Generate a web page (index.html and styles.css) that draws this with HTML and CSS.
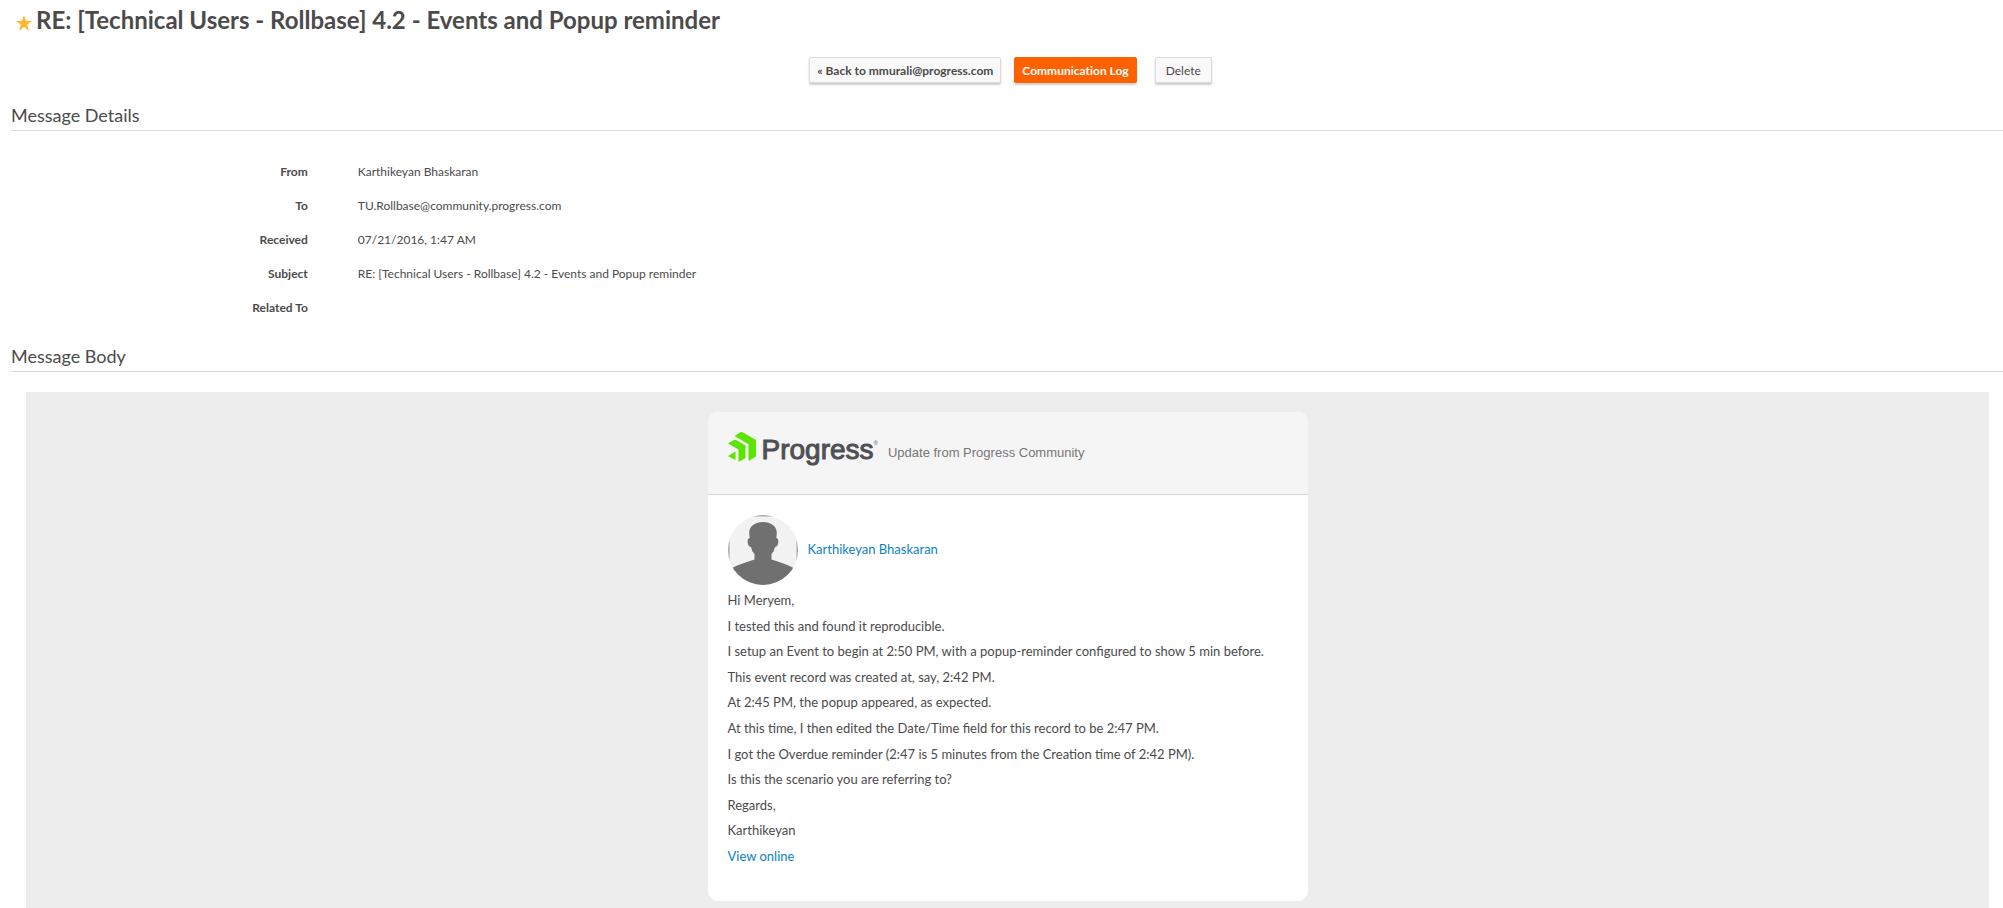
FILE: index.html
```html
<!DOCTYPE html>
<html lang="en">
<head>
    <meta charset="utf-8">
    <title>RE: [Technical Users - Rollbase] 4.2 - Events and Popup reminder</title>
    <link rel="stylesheet" href="styles.css">
</head>
<body>
    <header class="page-title">
        <svg class="star" viewBox="0 0 16 16" aria-hidden="true">
            <path d="M8 0l2 5.800 6 .1-4.800 3.700 1.800 6.100L8 12.100 3 15.700l1.800-6.100L0 5.900l6-.1z" fill="#fdb933"/>
        </svg>
        <h1>RE: [Technical Users - Rollbase] 4.2 - Events and Popup reminder</h1>
    </header>

    <div class="toolbar">
        <button type="button" class="btn btn-back">« Back to mmurali@progress.com</button>
        <button type="button" class="btn btn-primary">Communication Log</button>
        <button type="button" class="btn btn-delete">Delete</button>
    </div>

    <section class="section">
        <h2>Message Details</h2>
        <table class="details">
            <tr>
                <th scope="row">From</th>
                <td>Karthikeyan Bhaskaran</td>
            </tr>
            <tr>
                <th scope="row">To</th>
                <td>TU.Rollbase@community.progress.com</td>
            </tr>
            <tr>
                <th scope="row">Received</th>
                <td>07/21/2016, 1:47 AM</td>
            </tr>
            <tr>
                <th scope="row">Subject</th>
                <td>RE: [Technical Users - Rollbase] 4.2 - Events and Popup reminder</td>
            </tr>
            <tr>
                <th scope="row">Related To</th>
                <td></td>
            </tr>
        </table>
    </section>

    <section class="section">
        <h2>Message Body</h2>
        <div class="mail">
            <div class="card">
                <div class="card-header">
                    <!-- Progress logo -->
                    <svg class="logo-mark" viewBox="0 0 28 30" aria-hidden="true">
                        <g fill="#5ce500">
                            <path d="M6.500 4L12 .5Q13.500 -.3 15 .5L28 8V24.500L20.500 29V12.300z"/>
                            <path d="M0 11.500L5.500 8.200Q7 7.500 8.500 8.300L17.500 13.500V26L10.500 30V17.500z"/>
                            <path d="M0 24L7.500 19.500V28z"/>
                        </g>
                    </svg>
                    <span class="logo-name">Progress<sup>®</sup></span>
                    <span class="tagline">Update from Progress Community</span>
                </div>
                <div class="card-body">
                    <div class="author">
                        <svg class="avatar" viewBox="0 0 70 70" aria-hidden="true">
                            <defs>
                                <clipPath id="round"><circle cx="35" cy="35" r="35"/></clipPath>
                            </defs>
                            <g clip-path="url(#round)">
                                <rect width="70" height="70" fill="#f2f2f2"/>
                                <path d="M.5 0V70M69.500 0V70M0 .5H70" stroke="#a5a5a5" stroke-width="2"/>
                                <path d="M35 7C43 7 49 11.500 48.800 18L48.300 23C51 23 51 29 48.500 31.500C47 32 47 32 46.500 33.500C46 36 45 37.500 43.500 39V44.500C52 47.500 59 49 65.500 53V70H4V53C11 49 18 47.500 26.500 44.500V39C25 37.500 24 36 23.500 33.500C23 32 23 32 21.500 31.500C19 29 19 23 21.700 23L21.200 18C21 11.500 27 7 35 7z" fill="#707070"/>
                            </g>
                        </svg>
                        <a href="#">Karthikeyan Bhaskaran</a>
                    </div>
                    <p>Hi Meryem,</p>
                    <p>I tested this and found it reproducible.</p>
                    <p>I setup an Event to begin at 2:50 PM, with a popup-reminder configured to show 5 min before.</p>
                    <p>This event record was created at, say, 2:42 PM.</p>
                    <p>At 2:45 PM, the popup appeared, as expected.</p>
                    <p>At this time, I then edited the Date/Time field for this record to be 2:47 PM.</p>
                    <p>I got the Overdue reminder (2:47 is 5 minutes from the Creation time of 2:42 PM).</p>
                    <p>Is this the scenario you are referring to?</p>
                    <p>Regards,</p>
                    <p>Karthikeyan</p>
                    <p><a href="#">View online</a></p>
                </div>
            </div>
        </div>
    </section>
</body>
</html>
```

FILE: styles.css
```css
* {
    box-sizing: border-box;
}

body {
    margin: 0;
    font-family: Lato, sans-serif;
    font-size: 12px;
    color: #4b4b4b;
    background: #fff;
}

a {
    color: #0a82c8;
    text-decoration: none;
}

.page-title {
    display: flex;
    align-items: center;
    gap: 4px;
    height: 38px;
    padding-left: 16px;
}

.page-title h1 {
    margin: 0;
    font-size: 24px;
    font-weight: bold;
}

.star {
    width: 16px;
    height: 16px;
    margin-top: 8px;
}

.toolbar {
    display: flex;
    justify-content: center;
    padding: 19px 0 16px 18px;
}

.btn {
    height: 26px;
    padding: 0 7px;
    border: 1px solid #dcdcdc;
    border-radius: 2px;
    background: #f9f9f9;
    box-shadow: 0 2px 2px rgba(0, 0, 0, 0.2);
    color: #4b4b4b;
    font-family: inherit;
    font-size: 12px;
    font-variant-ligatures: none;
    cursor: pointer;
}

.btn-back {
    font-weight: bold;
}

.btn-primary {
    margin-left: 13px;
    border-color: #ff6000;
    background: #ff6000;
    color: #fff;
    font-weight: bold;
}

.btn-delete {
    margin-left: 18px;
    padding: 0 10px;
}

.section {
    padding-left: 11px;
}

.section h2 {
    height: 32px;
    margin: 0;
    border-bottom: 1px solid #d9d9d9;
    font-size: 18px;
    font-weight: normal;
    line-height: 32px;
}

.details {
    width: 100%;
    margin: 23px 0 16px;
    border-collapse: collapse;
}

.details tr {
    height: 34px;
}

.details th {
    width: 15%;
    padding: 0 2px 0 0;
    text-align: right;
}

.details td {
    padding: 0 0 0 48px;
}

.mail {
    margin: 20px 14px 0 15px;
    padding: 20px 0 7px;
    background: #ededed;
}

.card {
    max-width: 600px;
    margin: 0 auto;
    border-radius: 10px;
    background: #fff;
    font-size: 13px;
}

.card-header {
    display: flex;
    align-items: center;
    height: 83px;
    padding: 0 20px;
    border-bottom: 1px solid #d6d6d6;
    border-radius: 10px 10px 0 0;
    background: #f5f5f5;
    font-family: "Liberation Sans", Arial, sans-serif;
}

.logo-mark {
    width: 28px;
    height: 30px;
    margin-bottom: 12px;
}

.logo-name {
    display: flex;
    margin: 0 10px 6px 6px;
    color: #4f5056;
    font-size: 28px;
    -webkit-text-stroke: 1px #4f5056;
}

.logo-name sup {
    font-size: 6px;
    line-height: 18px;
    -webkit-text-stroke: 0;
}

.tagline {
    margin-bottom: 2px;
    color: #777;
}

.card-body {
    padding: 20px 20px 26px;
    line-height: 1.2;
}

.card-body p {
    margin: 0 0 10px;
}

.author {
    display: flex;
    align-items: center;
    gap: 10px;
    margin-bottom: 8px;
}

.avatar {
    width: 70px;
    height: 70px;
}
```
